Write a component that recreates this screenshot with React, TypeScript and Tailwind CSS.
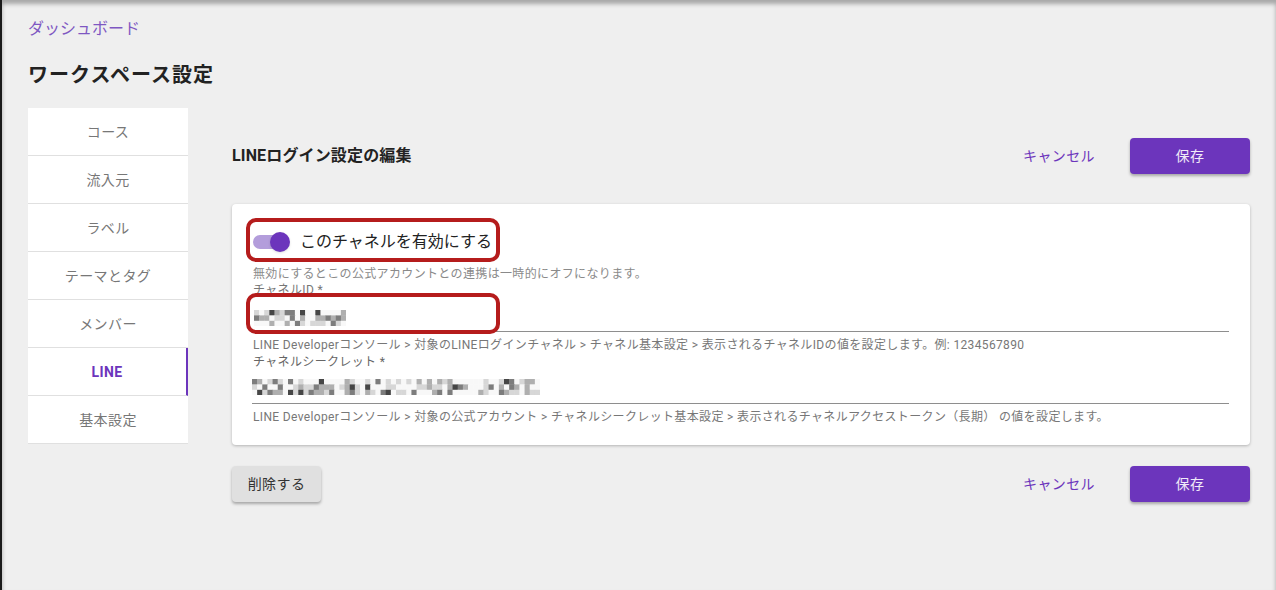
import React from "react";

const font = { fontFamily: 'Roboto, "Noto Sans CJK JP", sans-serif' };

const menu = ["コース", "流入元", "ラベル", "テーマとタグ", "メンバー", "LINE", "基本設定"];

// pixelated (masked) values
const mosaic = (seed: number, cols: number, rows: number) => {
  let s = seed;
  const rnd = () => {
    s = (s * 1103515245 + 12345) % 2147483648;
    return s / 2147483648;
  };
  const cells: { x: number; y: number; c: string }[] = [];
  for (let y = 0; y < rows; y++) {
    for (let x = 0; x < cols; x++) {
      const r = rnd();
      const v = r < 0.4 ? 248 : r < 0.65 ? 215 : r < 0.83 ? 175 : r < 0.95 ? 125 : 70;
      cells.push({ x, y, c: `rgb(${v},${v},${v})` });
    }
  }
  return cells;
};

const Mosaic = ({ seed, cols, w }: { seed: number; cols: number; w: number }) => {
  const cw = w / cols;
  return (
    <svg width={w} height={16} className="block">
      {mosaic(seed, cols, 3).map((c, i) => (
        <rect key={i} x={c.x * cw} y={c.y * 5.4} width={cw + 0.5} height={5.8} fill={c.c} />
      ))}
    </svg>
  );
};

const Header = ({ title }: { title?: string }) => (
  <div className="flex h-9 items-center">
    {title && <h2 className="text-base font-bold tracking-[0.15px] text-[#222]">{title}</h2>}
    <div className="ml-auto flex items-center gap-[27px]">
      <button className="h-9 px-2 text-sm tracking-[0.4px] text-[#6c35bc]">キャンセル</button>
      <button className="h-9 w-[120px] rounded bg-[#6c35bc] text-sm tracking-[0.4px] text-white/90 shadow-[0_2px_3px_rgba(0,0,0,0.3)]">
        保存
      </button>
    </div>
  </div>
);

export default function App() {
  return (
    <div
      style={font}
      className="h-[590px] overflow-hidden border-l-2 border-[#1a1a1a] bg-[#efefef] pl-[26px] shadow-[inset_0_4px_4px_rgba(0,0,0,0.3)]"
    >
      <div className="pt-[18px] text-base leading-[22px] text-[#7e57c2]">ダッシュボード</div>
      <h1 className="mt-[21px] text-xl font-bold leading-7 tracking-[1px] text-[#222]">ワークスペース設定</h1>

      <div className="mt-[19px] flex">
        <nav className="w-40 self-start bg-white">
          {menu.map((m) => (
            <div
              key={m}
              className={
                m === "LINE"
                  ? "flex h-12 items-center justify-center border-b border-r-2 border-b-[#e0e0e0] border-r-[#6c35bc] text-sm font-bold tracking-[0.4px] text-[#6c35bc]"
                  : "flex h-12 items-center justify-center border-b border-[#e0e0e0] text-sm tracking-[0.4px] text-[#777]"
              }
            >
              {m}
            </div>
          ))}
        </nav>

        <main className="ml-[44px] mr-[26px] flex-1 pt-[30px]">
          <Header title="LINEログイン設定の編集" />

          <section className="relative mt-[30px] rounded bg-white pb-[20px] pl-[20px] pr-[21px] pt-[18px] shadow-[0_1px_3px_rgba(0,0,0,0.25)]">
            <div className="flex h-10 items-center">
              <div className="relative ml-[1px] h-[14px] w-[34px] rounded-full bg-[#b39ddb]">
                <span className="absolute right-[-3px] top-[-3px] size-5 rounded-full bg-[#6c35bc] shadow" />
              </div>
              <span className="ml-[13px] text-base text-[#222]">このチャネルを有効にする</span>
            </div>
            <p className="mt-[4px] pl-px text-xs leading-4 tracking-[0.35px] text-[#8a8a8a]">
              無効にするとこの公式アカウントとの連携は一時的にオフになります。
            </p>

            <label className="block pl-px text-xs leading-4 tracking-[0.35px] text-[#777]">チャネルID *</label>
            <div className="h-[34px] border-b border-[#8e8e8e] pl-[2px] pt-[12px]">
              <Mosaic seed={7} cols={18} w={92} />
            </div>
            <p className="mt-[5px] pl-px text-xs leading-4 tracking-[0.35px] text-[#777]">
              LINE Developerコンソール &gt; 対象のLINEログインチャネル &gt; チャネル基本設定 &gt; 表示されるチャネルIDの値を設定します。例: 1234567890
            </p>

            <label className="mt-px block pl-px text-xs leading-4 tracking-[0.35px] text-[#666]">チャネルシークレット *</label>
            <div className="h-[34px] border-b border-[#8e8e8e] pt-[9px]">
              <Mosaic seed={31} cols={56} w={288} />
            </div>
            <p className="mt-[5px] pl-px text-xs leading-4 tracking-[0.35px] text-[#777]">
              LINE Developerコンソール &gt; 対象の公式アカウント &gt; チャネルシークレット基本設定 &gt; 表示されるチャネルアクセストークン（長期） の値を設定します。
            </p>

            <div className="absolute left-[14px] top-[14px] h-[44px] w-[254px] rounded-[10px] border-4 border-[#b51c1c]" />
            <div className="absolute left-[14px] top-[89px] h-[41px] w-[254px] rounded-[10px] border-4 border-[#b51c1c]" />
          </section>

          <div className="mt-[21px] flex items-center">
            <button className="h-9 w-[89px] rounded bg-[#e0e0e0] text-sm tracking-[0.4px] text-[#333] shadow-[0_2px_3px_rgba(0,0,0,0.3)]">
              削除する
            </button>
            <div className="flex-1">
              <Header />
            </div>
          </div>
        </main>
      </div>
    </div>
  );
}
